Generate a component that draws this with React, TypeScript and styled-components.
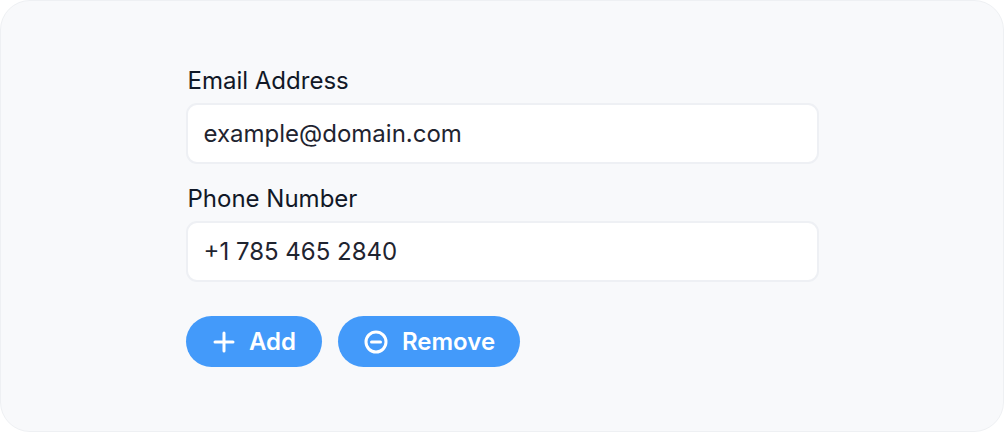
import React from "react";
import styled, { createGlobalStyle } from "styled-components";

const Global = createGlobalStyle`
  html, body { margin: 0; padding: 0; background: #ffffff; }
  body { font-family: Inter, "Noto Sans", sans-serif; }
  * { box-sizing: border-box; }
`;

const Card = styled.div`
  width: 1004px;
  height: 432px;
  background: #f8f9fb;
  border: 1px solid #eef0f3;
  border-radius: 30px;
  display: flex;
  justify-content: center;
  padding-top: 65px;
`;

const Column = styled.div`
  width: 633px;
  display: flex;
  flex-direction: column;
`;

const Field = styled.div`
  display: flex;
  flex-direction: column;
  gap: 8px;
  margin-bottom: 20px;
`;

const Label = styled.label`
  font-size: 24px;
  line-height: 29px;
  color: #111827;
  padding-left: 2px;
`;

const Input = styled.div`
  height: 61px;
  background: #ffffff;
  border: 2px solid #eef0f4;
  border-radius: 11px;
  display: flex;
  align-items: center;
  padding-left: 16px;
  font-size: 24px;
  color: #1f2430;
`;

const Actions = styled.div`
  display: flex;
  gap: 16px;
  margin-top: 14px;
`;

const Button = styled.button<{ $w: number }>`
  width: ${(p) => p.$w}px;
  height: 51px;
  border: none;
  border-radius: 26px;
  background: #439afa;
  color: #ffffff;
  font-family: Inter, "Noto Sans", sans-serif;
  font-size: 24px;
  font-weight: 600;
  display: flex;
  align-items: center;
  justify-content: center;
  gap: 14px;
  padding: 0 0 0 2px;
`;

const PlusIcon = () => (
  <svg width="22" height="22" viewBox="0 0 22 22" fill="none" stroke="#fff" strokeWidth="3" strokeLinecap="round">
    <path d="M11 2v18M2 11h18" />
  </svg>
);

const MinusCircleIcon = () => (
  <svg width="24" height="24" viewBox="0 0 24 24" fill="none" stroke="#fff" strokeWidth="3" strokeLinecap="round">
    <circle cx="12" cy="12" r="10" />
    <path d="M7.5 12h9" />
  </svg>
);

export default function App() {
  return (
    <>
      <Global />
      <Card>
        <Column>
          <Field>
            <Label>Email Address</Label>
            <Input>example@domain.com</Input>
          </Field>
          <Field>
            <Label>Phone Number</Label>
            <Input>+1 785 465 2840</Input>
          </Field>
          <Actions>
            <Button $w={136}>
              <PlusIcon />
              Add
            </Button>
            <Button $w={182}>
              <MinusCircleIcon />
              Remove
            </Button>
          </Actions>
        </Column>
      </Card>
    </>
  );
}
